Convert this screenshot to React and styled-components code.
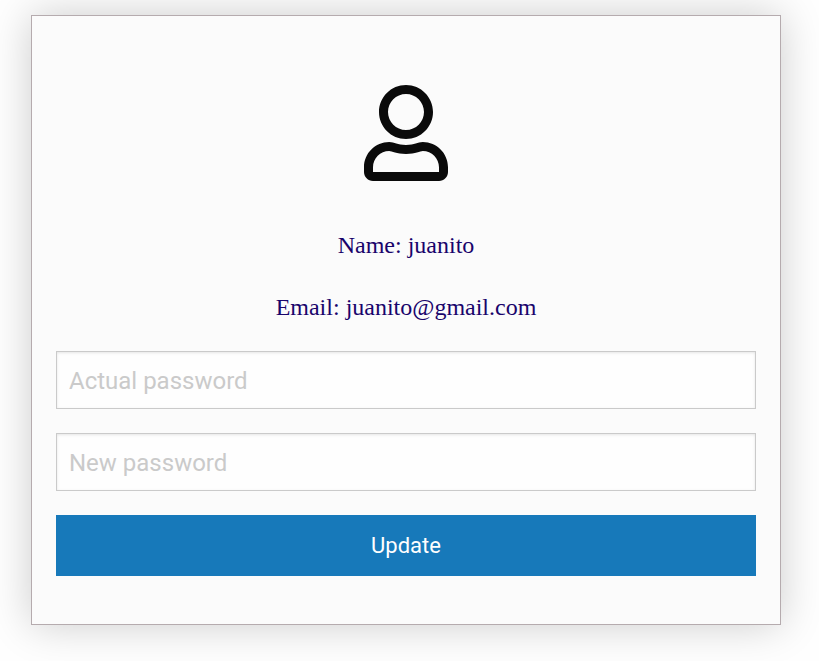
import React from "react";
import styled, { createGlobalStyle } from "styled-components";

const GlobalStyle = createGlobalStyle`
  *, *::before, *::after { box-sizing: border-box; }
  body { margin: 0; background: #fefefe; font-family: Roboto, sans-serif; }
`;

const Page = styled.main`
  padding: 15px 38px 36px 31px;
`;

const Card = styled.section`
  display: flex;
  flex-direction: column;
  padding: 69px 24px 48px;
  background: #fbfbfb;
  border: 1px solid #b5abae;
  box-shadow: 0 0 40px rgba(0, 0, 0, 0.2);
`;

const Avatar = styled.svg`
  align-self: center;
  width: 84px;
  height: 96px;
  margin-bottom: 46px;
`;

const Detail = styled.p`
  margin: 0 0 26px;
  font: 24px/36px "Liberation Serif", "Times New Roman", serif;
  color: #19046b;
  text-align: center;
`;

const Form = styled.form`
  display: flex;
  flex-direction: column;
  gap: 24px;
`;

const Field = styled.input`
  width: 100%;
  height: 58px;
  padding: 12px 12px 10px;
  border: 1px solid #cacaca;
  border-radius: 0;
  background: #fefefe;
  box-shadow: inset 0 1px 3px rgba(10, 10, 10, 0.1);
  font: 24px/36px Roboto, sans-serif;
  color: #0a0a0a;
  &::placeholder { color: #cacaca; opacity: 1; }
`;

const Submit = styled.button`
  height: 61px;
  padding: 0 12px;
  border: 0;
  background: #1779ba;
  color: #fefefe;
  font: 22px/24px Roboto, sans-serif;
  cursor: pointer;
`;

export default function App() {
  return (
    <>
      <GlobalStyle />
      <Page>
        <Card>
          <Avatar viewBox="0 0 448 512" fill="#0a0a0a" aria-hidden="true">
            <path d="M313.6 304c-28.700 0-42.500 16-89.600 16-47.100 0-60.800-16-89.600-16C60.200 304 0 364.200 0 438.400V464c0 26.500 21.500 48 48 48h352c26.500 0 48-21.500 48-48v-25.600c0-74.200-60.200-134.400-134.400-134.400zM400 464H48v-25.600c0-47.600 38.800-86.400 86.400-86.400 14.600 0 38.300 16 89.600 16 51.700 0 74.900-16 89.600-16 47.600 0 86.400 38.800 86.400 86.400V464zM224 288c79.500 0 144-64.500 144-144S303.500 0 224 0 80 64.500 80 144s64.500 144 144 144zm0-240c52.900 0 96 43.100 96 96s-43.100 96-96 96-96-43.100-96-96 43.100-96 96-96z" />
          </Avatar>
          <Detail>Name: juanito</Detail>
          <Detail>Email: juanito@gmail.com</Detail>
          <Form onSubmit={(event) => event.preventDefault()}>
            <Field type="password" placeholder="Actual password" aria-label="Actual password" />
            <Field type="password" placeholder="New password" aria-label="New password" />
            <Submit type="submit">Update</Submit>
          </Form>
        </Card>
      </Page>
    </>
  );
}
